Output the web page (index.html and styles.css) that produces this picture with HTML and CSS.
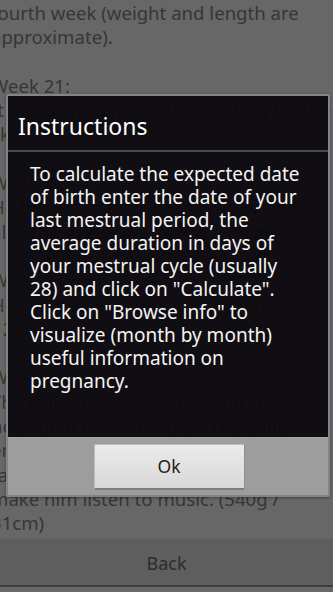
FILE: index.html
```html
<!DOCTYPE html>
<html>
<head>
<meta charset="utf-8">
<link rel="stylesheet" href="styles.css">
</head>
<body>
<div class="screen">
  <div class="content">
    <p>fourth week (weight and length are<br>approximate).</p>
    <p>Week 21:<br>It performs a protective coating for the<br>skin: the vernix caseosa. (360g / 25cm)</p>
    <p>Week 22:<br>He begins to have the first hair and<br>also the eyebrows. (430g / 19cm)</p>
    <p>Week 23:<br>He can perceive the light. (455g /<br>/ 29cm)</p>
    <p>Week 24:<br>The child hears the voice and the<br>heartbeat of the mother. The child<br>enjoys the sound, so you can<br>talk to him, sing to him and<br>make him listen to music. (540g /<br>31cm)</p>
  </div>
  <div class="backbar"><span class="back-label">Back</span></div>
  <div class="bottom-strip"></div>
</div>

<div class="dialog">
  <div class="dlg-title">Instructions</div>
  <div class="dlg-body">To calculate the expected date<br>of birth enter the date of your<br>last mestrual period, the<br>average duration in days of<br>your mestrual cycle (usually<br>28) and click on "Calculate".<br>Click on "Browse info" to<br>visualize (month by month)<br>useful information on<br>pregnancy.</div>
  <div class="dlg-buttons"><button class="ok-btn">Ok</button></div>
</div>
</body>
</html>
```

FILE: styles.css
```css
html, body {
  margin: 0;
  padding: 0;
}
body {
  width: 333px;
  height: 592px;
  overflow: hidden;
  background: #676767;
  font-family: "Noto Sans", "DejaVu Sans", sans-serif;
  position: relative;
}
.screen {
  height: 592px;
  display: flex;
  flex-direction: column;
}
.content {
  flex: 1;
  overflow: hidden;
  margin-left: -9px;
  padding-top: 1px;
  font-size: 18.6px;
  line-height: 24.3px;
  color: #363636;
  white-space: nowrap;
}
.content p {
  margin: 0 0 24.3px 0;
}
.backbar {
  height: 46px;
  background: #5e5e5e;
  border-top: 1px solid #646464;
  border-bottom: 2px solid #3e3e3e;
  display: flex;
  align-items: center;
  justify-content: center;
}
.back-label {
  font-size: 18px;
  color: #2c2c2c;
  padding-top: 2px;
}
.bottom-strip {
  height: 5px;
  background: #686868;
}
.dialog {
  position: absolute;
  left: 6px;
  top: 94px;
  width: 324px;
  box-sizing: border-box;
  border: 2px solid #848484;
  border-radius: 2px;
  box-shadow: 0 1px 3px rgba(0,0,0,0.35);
}
.dlg-title {
  height: 56px;
  box-sizing: border-box;
  background: rgba(12, 8, 14, 0.94);
  border-bottom: 2px solid #4a4a4c;
  color: #ffffff;
  font-size: 23px;
  line-height: 56px;
  padding: 2px 0 0 10px;
}
.dlg-body {
  height: 285px;
  box-sizing: border-box;
  background: rgba(12, 8, 14, 0.94);
  color: #f4f4f4;
  font-size: 19px;
  line-height: 23px;
  padding: 11px 10px 0 22px;
  white-space: nowrap;
}
.dlg-buttons {
  height: 58px;
  background: #9d9d9d;
  border-top: 1px solid #a8a8a8;
  box-sizing: border-box;
  display: flex;
  align-items: center;
  justify-content: center;
}
.ok-btn {
  width: 151px;
  height: 46px;
  margin-left: 2px;
  font-family: "Noto Sans", "DejaVu Sans", sans-serif;
  font-size: 17.5px;
  color: #222;
  background: linear-gradient(#ebebeb, #d8d8d8);
  border: 1px solid #bdbdbd;
  border-bottom: 2px solid #7e7e7e;
  border-right: 1px solid #8e8e8e;
  border-radius: 2px;
  padding: 0;
}
```
